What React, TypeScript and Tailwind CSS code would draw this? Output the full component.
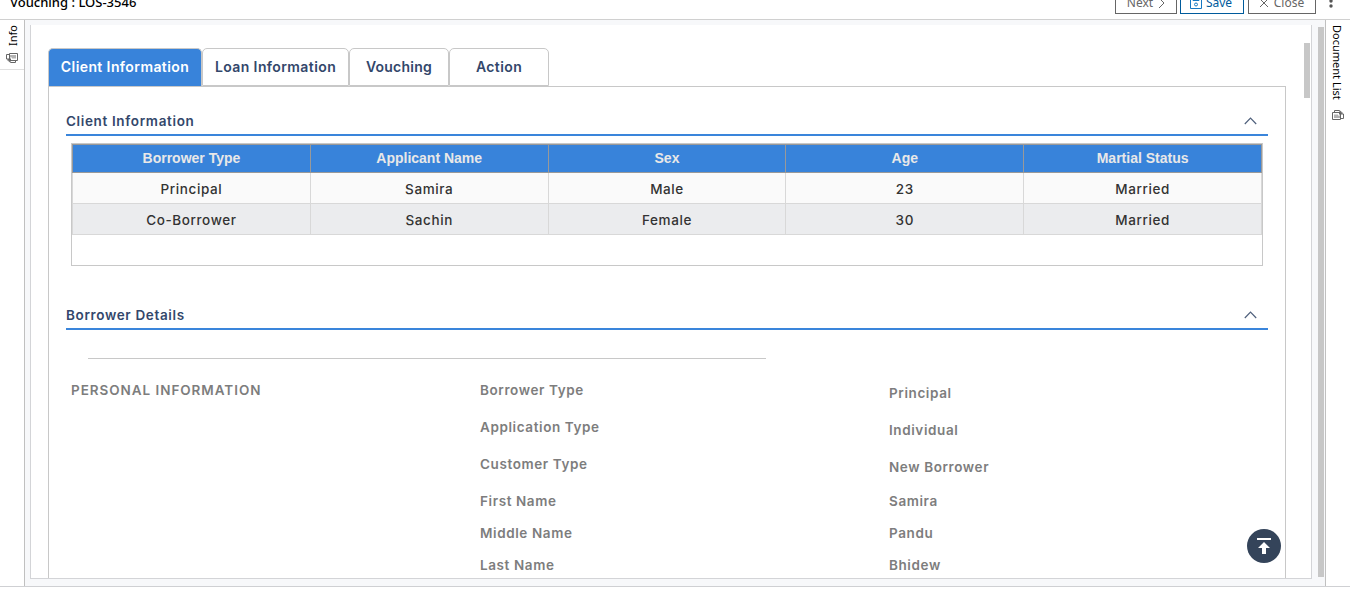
import React from "react";

const columns = ["Borrower Type", "Applicant Name", "Sex", "Age", "Martial Status"];
const rows = [
  ["Principal", "Samira", "Male", "23", "Married"],
  ["Co-Borrower", "Sachin", "Female", "30", "Married"],
];
const labels = ["Borrower Type", "Application Type", "Customer Type", "First Name", "Middle Name", "Last Name"];
const values = ["Principal", "Individual", "New Borrower", "Samira", "Pandu", "Bhidew"];

function SectionHead({ title }: { title: string }) {
  return (
    <div className="flex h-[30px] items-center justify-between border-b-2 border-[#3a85db] pt-[3px] pr-[11px]">
      <h2 className="text-[13.5px] font-semibold tracking-[0.65px] text-[#33476b]">{title}</h2>
      <svg className="mb-[2px]" width="13" height="8" viewBox="0 0 13 8" fill="none" stroke="#4f607c" strokeWidth="1.2">
        <path d="M.8 7 6.500 1.200 12.200 7" />
      </svg>
    </div>
  );
}

function DocIcon({ turned }: { turned?: boolean }) {
  return (
    <svg width="12" height="10" viewBox="0 0 12 10" className={turned ? "rotate-180" : ""} fill="none" stroke="#666" strokeWidth="1">
      <path d="M.5 2.500h8v7h-8zM3 4.500v3.500M5 4.500v3.500M7 5.500v2.500" />
      <path d="M2.500 2.500v-2h5l4 3.500v4.500h-3" />
      <path d="M7 1v3.500h4.500z" fill="#666" stroke="none" />
    </svg>
  );
}

export default function App() {
  return (
    <div className="flex h-[602px] w-[1350px] flex-col overflow-hidden bg-white font-['Inter',sans-serif] text-[13.5px]">
      <header className="flex h-5 shrink-0 items-start justify-between overflow-hidden border-b border-[#d0d0d0] pl-[10px] font-['Noto_Sans',sans-serif]">
        <div className="-mt-[8px] text-[13px] leading-[20px] font-medium text-black">Vouching : LOS-3546</div>
        <div className="-mt-[11px] flex gap-[3px] text-[12px] text-[#666]">
          <div className="flex h-[25px] w-[62px] items-center justify-center gap-[5px] border border-[#666] pt-[3px]">
            Next
            <svg width="7" height="12" viewBox="0 0 7 12" fill="none" stroke="#666"><path d="m1 1 5 5-5 5" /></svg>
          </div>
          <div className="flex h-[25px] w-[64px] items-center justify-center gap-1 border border-[#005b9c] pt-[3px] pr-[2px] text-[#005b9c]">
            <svg width="12" height="12" viewBox="0 0 12 12" fill="none" stroke="#1678c2"><path d="M.5.5h11v11H.500zM3 .5v3h6v-3" /><circle cx="6" cy="7.500" r="1.500" /></svg>
            Save
          </div>
          <div className="ml-px flex h-[25px] w-[68px] items-center justify-center gap-[6px] border border-[#666] pt-[3px]">
            <svg width="8" height="8" viewBox="0 0 8 8" stroke="#666"><path d="m0 0 8 8M8 0 0 8" /></svg>
            Close
          </div>
          <svg width="31" height="25" viewBox="0 0 31 25" fill="#555"><circle cx="12" cy="12" r="1.700" /><circle cx="12" cy="17" r="1.700" /></svg>
        </div>
      </header>

      <div className="flex h-[567px] shrink-0 border-b border-[#cfd0d3]">
        <aside className="w-[25px] shrink-0 border-r border-[#c0c0c0] font-['Noto_Sans',sans-serif] text-[11px]">
          <div className="flex h-[50px] flex-col items-center justify-between border-b border-[#e0e0e0] pt-[5px] pb-[6px] text-black">
            <span className="ml-[2px] rotate-180 leading-[14px] [writing-mode:vertical-rl]">Info</span>
            <DocIcon turned />
          </div>
        </aside>

        <main className="flex flex-1 bg-[#f7f8fa] pt-[5px] pl-[5px]">
          <div className="flex h-[554px] w-[1282px] overflow-hidden border-x border-b border-[#d3d4d7] bg-white">
            <div className="w-[1255px] pt-[23px] pl-[17px]">
              <nav className="flex h-[38px] text-[14px] font-semibold text-[#33476b] *:pb-[2px]">
                <div className="flex w-[154px] items-center justify-center rounded-t-[5px] border border-b-0 border-[#c8c8c8] bg-[#3883da] tracking-[0.4px] text-white">Client Information</div>
                <div className="flex w-[147px] items-center justify-center rounded-t-[5px] border border-[#c8c8c8] tracking-[0.4px]">Loan Information</div>
                <div className="flex w-[100px] items-center justify-center rounded-t-[5px] border border-[#c8c8c8] tracking-[0.25px]">Vouching</div>
                <div className="flex w-[100px] items-center justify-center rounded-t-[5px] border border-[#c8c8c8] tracking-[0.4px]">Action</div>
              </nav>
              <section className="h-[600px] w-[1238px] border border-[#c8c8c8] px-[17px] pt-[19px]">
                <SectionHead title="Client Information" />
                <div className="mt-[7px] ml-[5px] h-[123px] w-[1192px] border border-[#c8c8c8]">
                  <table className="w-[1190px] table-fixed border-collapse text-center">
                    <thead>
                      <tr className="h-[28px] bg-[#3883da] font-['Liberation_Sans',sans-serif] text-[14px] text-[#e8e8e8]">
                        {columns.map((c) => (
                          <th key={c} className="border border-[#999] p-0 pb-px leading-[20px] font-bold">{c}</th>
                        ))}
                      </tr>
                    </thead>
                    <tbody>
                      {rows.map((r, i) => (
                        <tr key={i} className={i ? "h-[31px] bg-[#ebecee]" : "h-[31px] bg-[#fafafa]"}>
                          {r.map((c, j) => (
                            <td key={j} className="border border-[#d8d8d8] p-0 pt-[2px] leading-[20px] font-medium tracking-[0.6px] text-[#333]">{c}</td>
                          ))}
                        </tr>
                      ))}
                    </tbody>
                  </table>
                </div>
                <div className="mt-[34px]"><SectionHead title="Borrower Details" /></div>
                <div className="mt-[28px] ml-[22px] h-px w-[678px] bg-[#c8c8c8]" />
                <div className="flex pl-[5px] font-semibold tracking-[0.6px] text-[#7d7d7d]">
                  <div className="w-[409px] pt-[21px] tracking-[0.95px]">PERSONAL INFORMATION</div>
                  <div className="w-[409px] pt-[13px]">
                    {labels.map((l, i) => (
                      <div key={l} className={i < 3 ? "flex h-[37px] items-center" : i === 3 ? "mt-[2px] flex h-8 items-center" : "flex h-8 items-center"}>{l}</div>
                    ))}
                  </div>
                  <div className="pt-[16px]">
                    {values.map((l, i) => (
                      <div key={l} className={i < 3 ? "flex h-[37px] items-center" : i === 3 ? "-mt-px flex h-8 items-center" : "flex h-8 items-center"}>{l}</div>
                    ))}
                  </div>
                </div>
              </section>
            </div>
            <div className="flex-1 pt-[18px] pl-[18px]">
              <div className="h-[55px] w-[6px] bg-[#c7c7c7]" />
            </div>
          </div>
          <div className="mt-[2px] ml-[6px] h-[550px] w-[6px] bg-[#c7c7c7]" />
        </main>

        <aside className="flex w-[25px] shrink-0 flex-col items-center border-l border-[#c0c0c0] pt-[5px] font-['Noto_Sans',sans-serif] text-[11px] text-black">
          <span className="mr-[2px] leading-[14px] [writing-mode:vertical-rl]">Document List</span>
          <div className="mt-[10px]"><DocIcon /></div>
        </aside>
      </div>

      <button className="absolute top-[529px] left-[1247px] flex size-[34px] items-center justify-center rounded-full bg-[#34445a]">
        <svg width="14" height="16" viewBox="0 0 14 16" fill="#fff"><path d="M0 0h14v2H0zM7 4l6 6H9v6H5v-6H1z" /></svg>
      </button>
    </div>
  );
}
